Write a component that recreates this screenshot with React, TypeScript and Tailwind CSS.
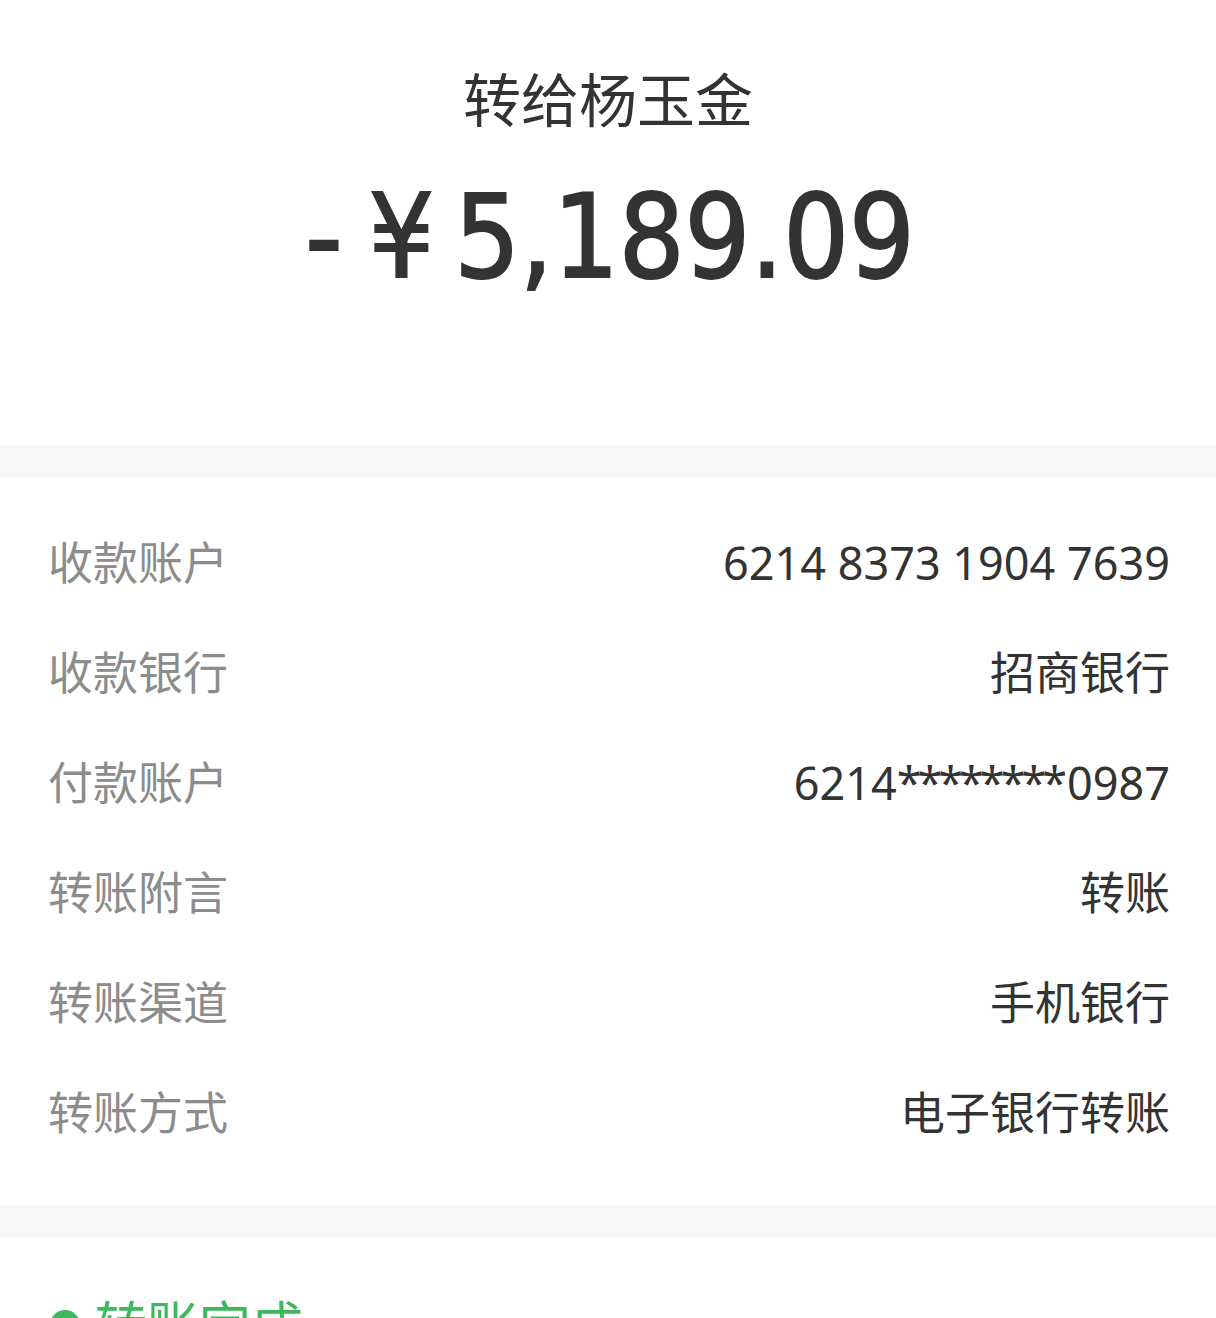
import React from "react";

const rows: [string, React.ReactNode][] = [
  ["收款账户", "6214 8373 1904 7639"],
  ["收款银行", "招商银行"],
  [
    "付款账户",
    <>
      6214<span className="tracking-[-4px] mr-[4px]">********</span>0987
    </>,
  ],
  ["转账附言", "转账"],
  ["转账渠道", "手机银行"],
  ["转账方式", "电子银行转账"],
];

export default function App() {
  return (
    <div
      className="w-[1216px] h-[1318px] overflow-hidden bg-white"
      style={{ fontFamily: '"Noto Sans", "Noto Sans CJK SC", sans-serif' }}
    >
      <div className="h-[445px] flex flex-col items-center">
        <div className="mt-[62px] h-[76px] flex items-center text-[58px] leading-none text-[#333333]">
          转给杨玉金
        </div>
        <div
          className="mt-[42px] ml-[4px] flex items-center text-[#333333] text-[115px] leading-none [-webkit-text-stroke:2px_#333333]"
          style={{ fontFamily: '"DejaVu Sans Condensed", sans-serif' }}
        >
          <span className="mr-[26px]">-</span>
          <span className="mr-[20px]">¥</span>
          <span>5,189.09</span>
        </div>
      </div>
      <div className="h-[32px] bg-[#f7f7f7]" />
      <div className="pt-[30px] pb-[38px] pl-[48px] pr-[46px]">
        {rows.map(([k, v]) => (
          <div key={k} className="h-[110px] flex items-center justify-between text-[45px] leading-none">
            <span className="text-[#8c8c8c]">{k}</span>
            <span className="text-[#333333]">{v}</span>
          </div>
        ))}
      </div>
      <div className="h-[32px] bg-[#f7f7f7]" />
      <div className="pt-[62px] px-[50px] flex items-center gap-[15px]">
        <span className="w-[30px] h-[30px] rounded-full bg-[#3cb95a]" />
        <span className="text-[52px] leading-none text-[#3cb95a]">转账完成</span>
      </div>
    </div>
  );
}
